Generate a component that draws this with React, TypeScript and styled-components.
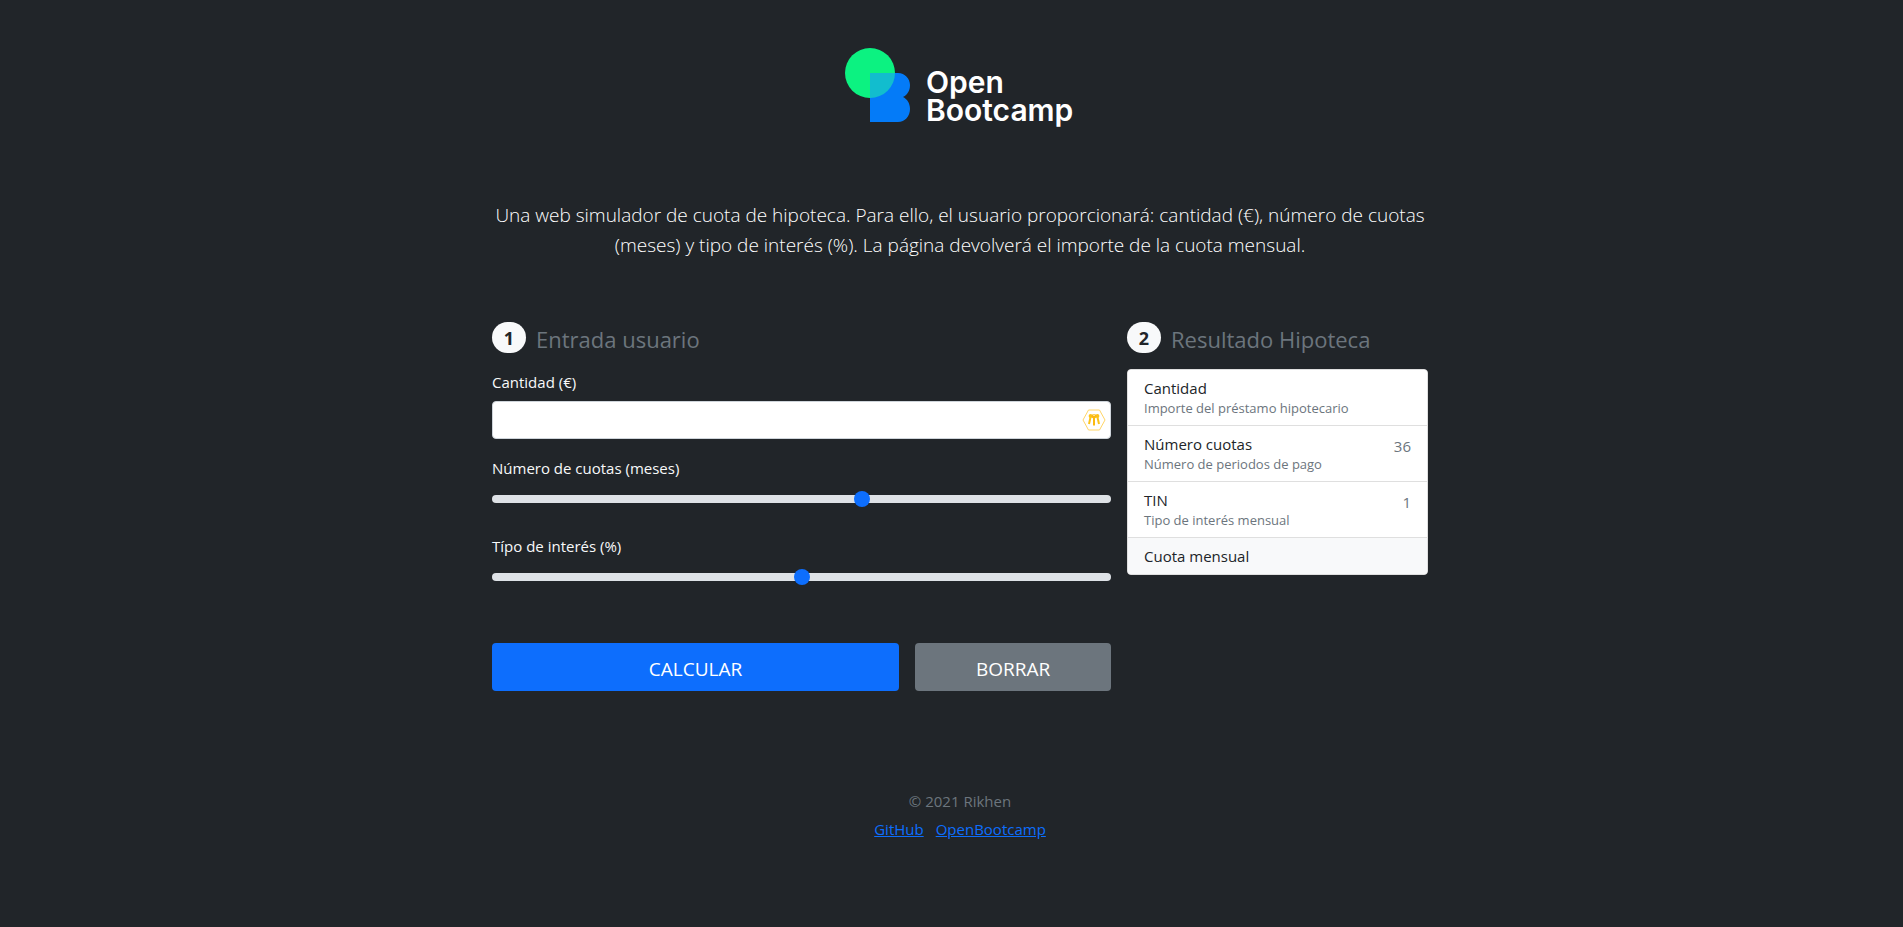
import React, { useState } from "react";
import styled, { createGlobalStyle } from "styled-components";

const GlobalStyle = createGlobalStyle`
  *, *::before, *::after { box-sizing: border-box; }
  body {
    margin: 0;
    background: #212529;
    color: #f8f9fa;
    font-family: "Open Sans", "Noto Sans", sans-serif;
    font-size: 15px;
    line-height: 24px;
  }
`;

const Page = styled.div`
  min-height: 100vh;
  padding-left: 17px;
`;

const Container = styled.div`
  max-width: 960px;
  margin: 0 auto;
  padding: 0 12px;
`;

const Header = styled.header`
  padding: 48px 0 62px;
  text-align: center;
`;

const Logo = styled.svg`
  display: block;
  margin: 0 auto 72px;
`;

const LogoText = styled.text`
  font-family: Inter, sans-serif;
  font-size: 30px;
  font-weight: 600;
  fill: #ffffff;
`;

const Lead = styled.p`
  margin: 0;
  font-size: 19px;
  font-weight: 300;
  line-height: 30px;
  color: #ffffff;
`;

const Columns = styled.div`
  display: grid;
  grid-template-columns: minmax(0, 619fr) minmax(0, 301fr);
  gap: 16px;
  align-items: start;

  @media (max-width: 767px) {
    grid-template-columns: minmax(0, 1fr);
  }
`;

const SectionTitle = styled.h4`
  display: flex;
  align-items: center;
  gap: 10px;
  height: 35px;
  margin: 0 0 12px;
  font-size: 22px;
  font-weight: 400;
  line-height: 29px;
  color: #6c757d;
`;

const Badge = styled.span`
  align-self: flex-start;
  width: 34px;
  height: 31px;
  border-radius: 16px;
  background: #f8f9fa;
  color: #212529;
  font-size: 18px;
  font-weight: 700;
  line-height: 32px;
  text-align: center;
`;

const Form = styled.form`
  padding-top: 1px;
`;

const Field = styled.div`
  margin-bottom: 23px;
`;

const AmountField = styled(Field)`
  margin-bottom: 17px;
`;

const Label = styled.label`
  display: block;
  margin-bottom: 7px;
`;

const InputWrap = styled.div`
  position: relative;
`;

const AmountInput = styled.input`
  display: block;
  width: 100%;
  height: 38px;
  padding: 6px 40px 6px 12px;
  border: 1px solid #ced4da;
  border-radius: 4px;
  background: #ffffff;
  color: #212529;
  font: inherit;
`;

const KeysIcon = styled.svg`
  position: absolute;
  top: 7px;
  right: 5px;
`;

const Range = styled.input`
  display: block;
  width: 100%;
  height: 24px;
  margin: 0;
  padding: 0;
  background: transparent;
  appearance: none;

  &::-webkit-slider-runnable-track {
    height: 8px;
    border-radius: 16px;
    background: #dee2e6;
  }
  &::-webkit-slider-thumb {
    width: 16px;
    height: 16px;
    margin-top: -4px;
    border: 0;
    border-radius: 16px;
    background: #0d6efd;
    appearance: none;
  }
`;

const Actions = styled.div`
  display: grid;
  grid-template-columns: minmax(0, 407fr) minmax(0, 196fr);
  gap: 16px;
  margin-top: 54px;
`;

const Button = styled.button<{ $color: string }>`
  height: 48px;
  padding: 3px 16px 0;
  border: 0;
  border-radius: 4px;
  background: ${(p) => p.$color};
  color: #ffffff;
  font: inherit;
  font-size: 19px;
`;

const List = styled.ul`
  margin: 0;
  padding: 0;
  list-style: none;
  overflow: hidden;
  border: 1px solid #dfdfdf;
  border-radius: 4px;
  background: #ffffff;
`;

const Item = styled.li<{ $total?: boolean }>`
  display: flex;
  justify-content: space-between;
  padding: ${(p) => (p.$total ? "8px 16px" : "8px 16px 6px")};
  background: ${(p) => (p.$total ? "#f8f9fa" : "#ffffff")};
  color: #212529;

  & + & {
    border-top: 1px solid #dfdfdf;
  }
`;

const ItemName = styled.h6`
  margin: 0;
  font-size: 15px;
  font-weight: 400;
  line-height: 20px;
`;

const ItemNote = styled.small`
  display: block;
  font-size: 13px;
  line-height: 21px;
  color: #6c757d;
`;

const ItemValue = styled.span`
  color: #6c757d;
`;

const Footer = styled.footer`
  padding: 98px 0 72px;
  text-align: center;
  color: #6c757d;
`;

const Copyright = styled.p`
  margin: 0 0 4px;
`;

const Links = styled.nav`
  display: flex;
  justify-content: center;
  gap: 12px;
`;

const Link = styled.a`
  color: #0d6efd;
`;

function BrandLogo() {
  return (
    <Logo width="230" height="80" viewBox="0 0 230 80" role="img" aria-label="Open Bootcamp">
      <circle cx="25" cy="25" r="25" fill="#0cf281" />
      <path d="M25 25H53C60 25 65 31 65 37C65 43 62 47 58 49C62 51 65 55 65 61C65 68 60 74 53 74H25Z" fill="#047bf8" />
      <path d="M25 25H50A25 25 0 0 1 25 50Z" fill="#12bdce" />
      <LogoText x="81" y="45">Open</LogoText>
      <LogoText x="81" y="73">Bootcamp</LogoText>
    </Logo>
  );
}

function Keys() {
  return (
    <KeysIcon width="24" height="24" viewBox="0 0 24 24" aria-hidden="true" fill="none">
      <path d="M6.500 2H17.500L23 12L17.500 22H6.500L1 12Z" stroke="#ffd566" strokeWidth="1" />
      <g stroke="#fbc31b" strokeWidth="2">
        <path d="M8.800 8L7 16" />
        <path d="M15.200 8L17 16" />
      </g>
      <g fill="#fbc31b">
        <circle cx="8.600" cy="8" r="2" />
        <circle cx="15.400" cy="8" r="2" />
      </g>
      <g fill="#fbb910">
        <path d="M11 9H13V17L12 18L11 17Z" />
        <circle cx="12" cy="8.200" r="2.300" />
      </g>
      <circle cx="12" cy="7.300" r="0.700" fill="#ffffff" />
    </KeysIcon>
  );
}

export default function App() {
  const [amount, setAmount] = useState("");
  const [months, setMonths] = useState(36);
  const [rate, setRate] = useState(1);

  const reset = () => {
    setAmount("");
    setMonths(36);
    setRate(1);
  };

  return (
    <Page>
      <GlobalStyle />
      <Container>
        <Header>
          <BrandLogo />
          <Lead>
            Una web simulador de cuota de hipoteca. Para ello, el usuario proporcionará: cantidad (€), número de cuotas
            (meses) y tipo de interés (%). La página devolverá el importe de la cuota mensual.
          </Lead>
        </Header>
        <Columns>
          <section>
            <SectionTitle>
              <Badge>1</Badge>
              Entrada usuario
            </SectionTitle>
            <Form onSubmit={(e) => e.preventDefault()}>
              <AmountField>
                <Label htmlFor="amount">Cantidad (€)</Label>
                <InputWrap>
                  <AmountInput id="amount" value={amount} onChange={(e) => setAmount(e.target.value)} />
                  <Keys />
                </InputWrap>
              </AmountField>
              <Field>
                <Label htmlFor="months">Número de cuotas (meses)</Label>
                <Range
                  id="months"
                  type="range"
                  min="0"
                  max="60"
                  value={months}
                  onChange={(e) => setMonths(Number(e.target.value))}
                />
              </Field>
              <Field>
                <Label htmlFor="rate">Típo de interés (%)</Label>
                <Range
                  id="rate"
                  type="range"
                  min="0"
                  max="2"
                  step="0.1"
                  value={rate}
                  onChange={(e) => setRate(Number(e.target.value))}
                />
              </Field>
              <Actions>
                <Button type="submit" $color="#0d6efd">CALCULAR</Button>
                <Button type="button" $color="#6c757d" onClick={reset}>BORRAR</Button>
              </Actions>
            </Form>
          </section>
          <section>
            <SectionTitle>
              <Badge>2</Badge>
              Resultado Hipoteca
            </SectionTitle>
            <List>
              <Item>
                <div>
                  <ItemName>Cantidad</ItemName>
                  <ItemNote>Importe del préstamo hipotecario</ItemNote>
                </div>
                <ItemValue>{amount}</ItemValue>
              </Item>
              <Item>
                <div>
                  <ItemName>Número cuotas</ItemName>
                  <ItemNote>Número de periodos de pago</ItemNote>
                </div>
                <ItemValue>{months}</ItemValue>
              </Item>
              <Item>
                <div>
                  <ItemName>TIN</ItemName>
                  <ItemNote>Tipo de interés mensual</ItemNote>
                </div>
                <ItemValue>{rate}</ItemValue>
              </Item>
              <Item $total>
                <ItemName>Cuota mensual</ItemName>
              </Item>
            </List>
          </section>
        </Columns>
        <Footer>
          <Copyright>© 2021 Rikhen</Copyright>
          <Links>
            <Link href="#github">GitHub</Link>
            <Link href="#openbootcamp">OpenBootcamp</Link>
          </Links>
        </Footer>
      </Container>
    </Page>
  );
}
